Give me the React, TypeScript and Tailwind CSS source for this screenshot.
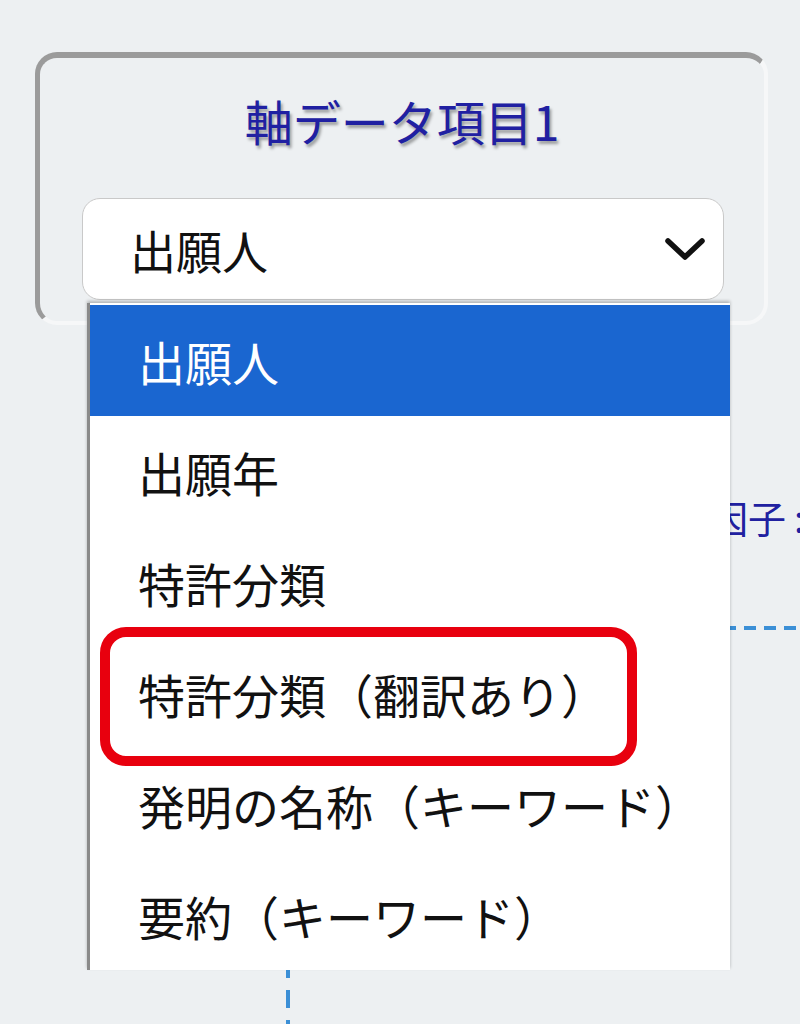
const options = [
  "出願人",
  "出願年",
  "特許分類",
  "特許分類（翻訳あり）",
  "発明の名称（キーワード）",
  "要約（キーワード）",
];

const font = { fontFamily: '"Noto Sans CJK JP", "Noto Sans", sans-serif' };

export default function App() {
  return (
    <div
      className="relative w-[800px] h-[1024px] overflow-hidden bg-[#edf0f2]"
      style={font}
    >
      {/* Background diagram pieces, partly hidden by the open list */}
      <div className="absolute left-[710px] top-[493px] flex items-center text-[38px] leading-[48px] text-[#2020a0] whitespace-nowrap">
        <span>因子</span>
        <span className="ml-[8px]">:</span>
      </div>
      <div className="absolute left-[724px] top-[626px] w-[120px] h-[4px] bg-[repeating-linear-gradient(90deg,#3b8fd6_0_12px,transparent_12px_20px)]" />
      <div className="absolute left-[286px] top-[900px] w-[4px] h-[140px] bg-[repeating-linear-gradient(180deg,#3b8fd6_0_18px,transparent_18px_30px)]" />

      {/* Card */}
      <div className="relative ml-[35px] mt-[52px] w-[733px] h-[273px] rounded-[22px] border-t-[6px] border-l-[5px] border-r-4 border-b-4 border-t-[#9b9b9b] border-l-[#9b9b9b] border-r-[#f6f7f8] border-b-[#f6f7f8]">
        <h2
          className="pt-[33px] text-center text-[48px] leading-[58px] font-normal text-[#2020a2]"
          style={{ textShadow: "2px 3px 3px rgba(0,0,0,0.35)" }}
        >
          軸データ項目1
        </h2>
        <div className="ml-[42px] mt-[49px] w-[642px] h-[102px] rounded-[18px] border border-[#c9c9c9] bg-white flex items-center justify-between pl-[47px] pr-[16px]">
          <span className="text-[46px] leading-none text-[#111]">出願人</span>
          <svg width="44" height="26" viewBox="0 0 44 26" fill="none">
            <path
              d="M5 5 L22 21 L39 5"
              stroke="#111"
              strokeWidth="5.5"
              strokeLinecap="round"
              strokeLinejoin="round"
            />
          </svg>
        </div>
      </div>

      {/* Open option list */}
      <div className="absolute left-[87px] top-[303px] w-[643px] h-[667px] bg-white border-l-[3px] border-[#8a8a8a] shadow-[0_-2px_3px_rgba(0,0,0,0.25)]">
        <div className="flex flex-col pt-[2px]">
          {options.map((o, i) => (
            <div
              key={o}
              className={
                i === 0
                  ? "h-[111px] flex items-center pl-[48px] bg-[#1a66d0] text-white text-[47px] leading-none"
                  : "h-[111px] flex items-center pl-[48px] text-[#111] text-[47px] leading-none whitespace-nowrap"
              }
            >
              {o}
            </div>
          ))}
        </div>
        <div className="absolute left-[10px] top-[324px] w-[537px] h-[139px] rounded-[26px] border-[10px] border-[#e8000e]" />
      </div>
    </div>
  );
}
